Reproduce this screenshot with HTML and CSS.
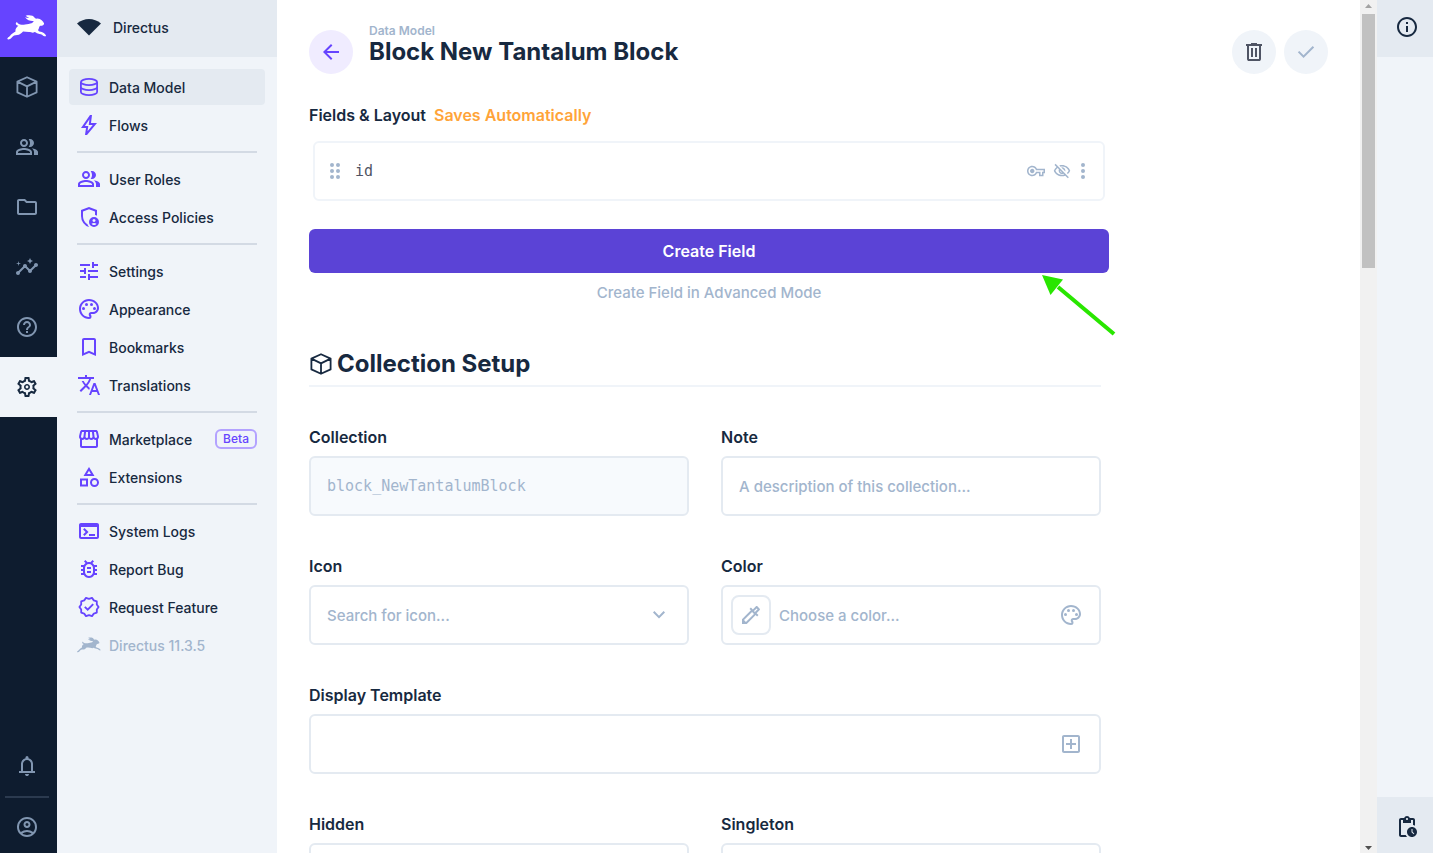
FILE: index.html
```html
<!DOCTYPE html>
<html lang="en">
<head>
<meta charset="utf-8">
<title>Block New Tantalum Block · Directus</title>
<link rel="stylesheet" href="styles.css">
</head>
<body>
<svg class="sprite" aria-hidden="true">
  <symbol id="rabbit" viewBox="0 0 120 76"><path d="M26 24C27 21 31 21 32 25C38 29 46 31 54 29C62 28 68 26 76 24C77 22 79 20 81 18C72 19 61 17 54 7C58 9 63 10 67 9C63 7 59 5 56 2C66 0 79 0 84 9C87 12 89 11 92 11C102 12 109 19 112 26C112 31 107 33 101 33C98 34 97 37 96 41C93 45 93 48 98 50C108 52 116 56 118 63C118 66 113 65 109 63C105 58 99 58 93 56C89 56 87 53 83 52C77 56 73 52 66 52C59 51 53 50 48 50C43 55 38 60 30 61C23 61 18 63 13 69C9 73 4 76 0 73C1 69 5 67 8 64C13 57 18 54 25 50C24 44 27 38 34 33C30 31 25 30 26 24Z"/></symbol>
  <symbol id="box" viewBox="0 0 24 24"><path fill="none" stroke="currentColor" stroke-width="1.8" stroke-linejoin="round" d="M12 2.2 21.6 6.6V17.4L12 21.8 2.4 17.4V6.6ZM2.4 6.6 12 11.4 21.6 6.6M12 11.4V21.8"/></symbol>
  <symbol id="people" viewBox="0 0 24 24"><path d="M16.67 13.13C18.04 14.06 19 15.32 19 17v3h4v-3c0-2.18-3.57-3.47-6.33-3.87zM15 12c2.21 0 4-1.79 4-4s-1.79-4-4-4c-.47 0-.91.1-1.33.24C14.5 5.27 15 6.58 15 8s-.5 2.73-1.33 3.76c.42.14.86.24 1.33.24zM9 12c2.21 0 4-1.79 4-4s-1.79-4-4-4-4 1.79-4 4 1.79 4 4 4zm0-6c1.1 0 2 .9 2 2s-.9 2-2 2-2-.9-2-2 .9-2 2-2zM9 13c-2.67 0-8 1.34-8 4v3h16v-3c0-2.66-5.33-4-8-4zm6 5H3v-.99C3.2 16.29 6.3 15 9 15s5.8 1.29 6 2v1z"/></symbol>
  <symbol id="folder" viewBox="0 0 24 24"><path d="M9.17 6l2 2H20v10H4V6h5.17M10 4H4c-1.1 0-1.99.9-1.99 2L2 18c0 1.1.9 2 2 2h16c1.1 0 2-.9 2-2V8c0-1.1-.9-2-2-2h-8l-2-2z"/></symbol>
  <symbol id="insights" viewBox="0 0 24 24"><path d="M21 8c-1.45 0-2.26 1.44-1.93 2.51l-3.55 3.56c-.3-.09-.74-.09-1.04 0l-2.55-2.55C12.27 10.45 11.46 9 10 9c-1.45 0-2.27 1.44-1.93 2.52l-4.56 4.55C2.44 15.74 1 16.55 1 18c0 1.1.9 2 2 2 1.45 0 2.26-1.44 1.93-2.51l4.55-4.56c.3.09.74.09 1.04 0l2.55 2.55C12.73 16.55 13.54 18 15 18c1.45 0 2.27-1.44 1.93-2.52l3.56-3.55C21.56 12.26 23 11.45 23 10c0-1.1-.9-2-2-2zM15 9l.94-2.07L18 6l-2.06-.93L15 3l-.92 2.07L12 6l2.08.93zM3.5 11L4 9l2-.5L4 8l-.5-2L3 8l-2 .5L3 9z"/></symbol>
  <symbol id="help" viewBox="0 0 24 24"><path d="M11 18h2v-2h-2v2zm1-16C6.48 2 2 6.48 2 12s4.48 10 10 10 10-4.48 10-10S17.52 2 12 2zm0 18c-4.41 0-8-3.59-8-8s3.59-8 8-8 8 3.59 8 8-3.59 8-8 8zm0-14c-2.21 0-4 1.79-4 4h2c0-1.1.9-2 2-2s2 .9 2 2c0 2-3 1.75-3 5h2c0-2.25 3-2.5 3-5 0-2.21-1.79-4-4-4z"/></symbol>
  <symbol id="gear" viewBox="0 0 24 24"><path d="M19.43 12.98c.04-.32.07-.64.07-.98 0-.34-.03-.66-.07-.98l2.11-1.65c.19-.15.24-.42.12-.64l-2-3.46c-.09-.16-.26-.25-.44-.25-.06 0-.12.01-.17.03l-2.49 1c-.52-.4-1.08-.73-1.69-.98l-.38-2.65C14.46 2.18 14.25 2 14 2h-4c-.25 0-.46.18-.49.42l-.38 2.65c-.61.25-1.17.59-1.69.98l-2.49-1c-.06-.02-.12-.03-.18-.03-.17 0-.34.09-.43.25l-2 3.46c-.13.22-.07.49.12.64l2.11 1.65c-.04.32-.07.65-.07.98 0 .33.03.66.07.98l-2.11 1.65c-.19.15-.24.42-.12.64l2 3.46c.09.16.26.25.44.25.06 0 .12-.01.17-.03l2.49-1c.52.4 1.08.73 1.69.98l.38 2.65c.03.24.24.42.49.42h4c.25 0 .46-.18.49-.42l.38-2.65c.61-.25 1.17-.59 1.69-.98l2.49 1c.06.02.12.03.18.03.17 0 .34-.09.43-.25l2-3.46c.12-.22.07-.49-.12-.64l-2.11-1.65zm-1.98-1.71c.04.31.05.52.05.73 0 .21-.02.43-.05.73l-.14 1.13.89.7 1.08.84-.7 1.21-1.27-.51-1.04-.42-.9.68c-.43.32-.84.56-1.25.73l-1.06.43-.16 1.13-.2 1.35h-1.4l-.19-1.35-.16-1.13-1.06-.43c-.43-.18-.83-.41-1.23-.71l-.91-.7-1.06.43-1.27.51-.7-1.21 1.08-.84.89-.7-.14-1.13c-.03-.31-.05-.54-.05-.74s.02-.43.05-.73l.14-1.13-.89-.7-1.08-.84.7-1.21 1.27.51 1.04.42.9-.68c.43-.32.84-.56 1.25-.73l1.06-.43.16-1.13.2-1.35h1.39l.19 1.35.16 1.13 1.06.43c.43.18.83.41 1.23.71l.91.7 1.06-.43 1.27-.51.7 1.21-1.07.85-.89.7.14 1.13zM12 9c-1.66 0-3 1.34-3 3s1.34 3 3 3 3-1.34 3-3-1.34-3-3-3zm0 4.4c-.77 0-1.4-.63-1.4-1.4s.63-1.4 1.4-1.4 1.4.63 1.4 1.4-.63 1.4-1.4 1.4z"/></symbol>
  <symbol id="bell" viewBox="0 0 24 24"><path d="M4 19v-2h2v-7q0-2.075 1.25-3.687T10.5 4.2v-.7q0-.625.438-1.062T12 2t1.063.438T13.5 3.5v.7q2 .5 3.25 2.113T18 10v7h2v2zM12 22q-.825 0-1.412-.587T10 20h4q0 .825-.587 1.413T12 22m-4-5h8v-7q0-1.65-1.175-2.825T12 6 9.175 7.175 8 10z"/></symbol>
  <symbol id="account" viewBox="0 0 24 24"><path d="M5.85 17.1q1.275-.975 2.85-1.537T12 15t3.3.563 2.85 1.537q.875-1.025 1.363-2.325T20 12q0-3.325-2.337-5.663T12 4 6.338 6.338 4 12q0 1.475.488 2.775T5.85 17.1M12 13q-1.475 0-2.488-1.012T8.5 9.5t1.013-2.488T12 6t2.488 1.013T15.5 9.5t-1.012 2.488T12 13m0 9q-2.075 0-3.9-.788t-3.175-2.137-2.137-3.175T2 12t.788-3.9 2.137-3.175T8.1 2.788 12 2t3.9.788 3.175 2.137T21.213 8.1 22 12t-.788 3.9-2.137 3.175-3.175 2.138T12 22m0-2q1.325 0 2.5-.387t2.15-1.113q-.975-.725-2.15-1.112T12 17t-2.5.388T7.35 18.5q.975.725 2.15 1.113T12 20m0-9q.65 0 1.075-.425T13.5 9.5t-.425-1.075T12 8t-1.075.425T10.5 9.5t.425 1.075T12 11"/></symbol>
  <symbol id="fan" viewBox="0 0 24 24"><path d="M0 7.5C7 1.5 17 1.5 24 7.5L12 19.5Z"/></symbol>
  <symbol id="database" viewBox="0 0 24 24"><path fill="none" stroke="currentColor" stroke-width="1.8" d="M12 3.9c4.5 0 8.1 1.4 8.1 3.1s-3.6 3.1-8.1 3.1S3.9 8.7 3.9 7 7.5 3.9 12 3.9ZM3.9 7v10c0 1.7 3.6 3.1 8.1 3.1s8.1-1.4 8.1-3.1V7M3.9 12c0 1.7 3.6 3.1 8.1 3.1s8.1-1.4 8.1-3.1"/></symbol>
  <symbol id="bolt" viewBox="0 0 24 24"><path d="m10.55 18.2 5.175-6.2h-4l.725-5.675L7.825 13H11.3zM8 22l1-7H4l9-13h2l-1 8h6L10 22z"/></symbol>
  <symbol id="shield" viewBox="0 0 24 24"><path d="M17 17q.625 0 1.063-.437T18.5 15.5t-.437-1.062T17 14t-1.062.438T15.5 15.5t.438 1.063T17 17m0 3q.775 0 1.425-.363t1.05-.962q-.55-.325-1.175-.5T17 18t-1.3.175-1.175.5q.4.6 1.05.963T17 20m-5 2q-3.475-.875-5.738-3.988T4 11.1V5l8-3 8 3v5.675q-.475-.2-.975-.363T18 10.076V6.4l-6-2.25L6 6.4v4.7q0 1.175.313 2.35t.875 2.238T8.55 17.65t1.775 1.425q.275.8.725 1.525t1.025 1.375q-.025 0-.037.013T12 22m5 0q-2.075 0-3.537-1.463T12 17t1.463-3.537T17 12t3.538 1.463T22 17t-1.463 3.538T17 22"/></symbol>
  <symbol id="tune" viewBox="0 0 24 24"><path d="M3 17v2h6v-2H3zM3 5v2h10V5H3zm10 16v-2h8v-2h-8v-2h-2v6h2zM7 9v2H3v2h4v2h2V9H7zm14 4v-2H11v2h10zm-6-4h2V7h4V5h-4V3h-2v6z"/></symbol>
  <symbol id="palette" viewBox="0 0 24 24"><path d="M12 22C6.49 22 2 17.51 2 12S6.49 2 12 2s10 4.04 10 9c0 3.31-2.69 6-6 6h-1.77c-.28 0-.5.22-.5.5 0 .12.05.23.13.33.41.47.64 1.06.64 1.67A2.5 2.5 0 0 1 12 22zm0-18c-4.41 0-8 3.59-8 8s3.59 8 8 8c.28 0 .5-.22.5-.5a.54.54 0 0 0-.14-.35c-.41-.46-.63-1.05-.63-1.65a2.5 2.5 0 0 1 2.5-2.5H16c2.21 0 4-1.79 4-4 0-3.86-3.59-7-8-7z"/><circle cx="6.5" cy="11.5" r="1.5"/><circle cx="9.5" cy="7.5" r="1.5"/><circle cx="14.5" cy="7.5" r="1.5"/><circle cx="17.5" cy="11.5" r="1.5"/></symbol>
  <symbol id="bookmark" viewBox="0 0 24 24"><path d="M17 3H7c-1.1 0-1.99.9-1.99 2L5 21l7-3 7 3V5c0-1.1-.9-2-2-2zm0 15l-5-2.18L7 18V5h10v13z"/></symbol>
  <symbol id="translate" viewBox="0 0 24 24"><path d="M12.87 15.07l-2.54-2.51.03-.03c1.74-1.94 2.98-4.17 3.71-6.53H17V4h-7V2H8v2H1v1.99h11.17C11.5 7.92 10.44 9.75 9 11.35 8.07 10.32 7.3 9.19 6.69 8h-2c.73 1.63 1.73 3.17 2.98 4.56l-5.09 5.02L4 19l5-5 3.11 3.11.76-2.04zM18.5 10h-2L12 22h2l1.12-3h4.75L21 22h2l-4.5-12zm-2.62 7l1.62-4.33L19.12 17h-3.24z"/></symbol>
  <symbol id="store" viewBox="0 0 24 24"><path d="M21.9 8.89l-1.05-4.37c-.22-.9-1-1.52-1.91-1.52H5.05c-.9 0-1.69.63-1.9 1.52L2.1 8.89c-.24 1.02-.02 2.06.62 2.88.08.11.19.19.28.29V19c0 1.1.9 2 2 2h14c1.1 0 2-.9 2-2v-6.94c.09-.09.2-.18.28-.28.64-.82.87-1.87.62-2.89zm-2.99-3.9l1.05 4.37c.1.42.01.84-.25 1.17-.14.18-.44.47-.94.47-.61 0-1.14-.49-1.21-1.14L16.98 5l1.93-.01zM13 5h1.96l.54 4.52c.05.39-.07.78-.33 1.07-.22.26-.54.41-.95.41-.67 0-1.22-.59-1.22-1.31V5zM8.49 9.52L9.04 5H11v4.69c0 .72-.55 1.31-1.29 1.31-.34 0-.65-.15-.89-.41a1.42 1.42 0 0 1-.33-1.07zm-4.45-.16L5.05 5h1.97l-.58 4.86c-.08.65-.6 1.14-1.21 1.14-.49 0-.8-.29-.93-.47a1.32 1.32 0 0 1-.26-1.17zM5 19v-6.03c.08.01.15.03.23.03.87 0 1.66-.36 2.24-.95.6.6 1.4.95 2.31.95.87 0 1.65-.36 2.23-.93.59.57 1.39.93 2.29.93.84 0 1.64-.35 2.24-.95.58.59 1.37.95 2.24.95.08 0 .15-.02.23-.03V19H5z"/></symbol>
  <symbol id="category" viewBox="0 0 24 24"><path d="M12 2l-5.5 9h11L12 2zm0 3.84L13.93 9h-3.87L12 5.84zM17.5 13c-2.49 0-4.5 2.01-4.5 4.5s2.01 4.5 4.5 4.5 4.5-2.01 4.5-4.5-2.01-4.5-4.5-4.5zm0 7a2.5 2.5 0 0 1 0-5 2.5 2.5 0 0 1 0 5zM3 21.5h8v-8H3v8zm2-6h4v4H5v-4z"/></symbol>
  <symbol id="terminal" viewBox="0 0 24 24"><path d="M20 4H4c-1.1 0-2 .9-2 2v12c0 1.1.9 2 2 2h16c1.1 0 2-.9 2-2V6c0-1.1-.9-2-2-2zm0 14H4V8h16v10zm-2-1h-6v-2h6v2zM7.5 17l-1.41-1.41L8.67 13l-2.59-2.59L7.5 9l4 4-4 4z"/></symbol>
  <symbol id="bug" viewBox="0 0 24 24"><path d="M20 8h-2.81c-.45-.78-1.07-1.45-1.82-1.96L17 4.41 15.59 3l-2.17 2.17C12.96 5.06 12.49 5 12 5s-.96.06-1.41.17L8.41 3 7 4.41l1.62 1.63C7.88 6.55 7.26 7.22 6.81 8H4v2h2.09c-.05.33-.09.66-.09 1v1H4v2h2v1c0 .34.04.67.09 1H4v2h2.81c1.04 1.79 2.97 3 5.19 3s4.15-1.21 5.19-3H20v-2h-2.09c.05-.33.09-.66.09-1v-1h2v-2h-2v-1c0-.34-.04-.67-.09-1H20V8zm-4 7c0 2.21-1.79 4-4 4s-4-1.79-4-4v-4c0-2.21 1.79-4 4-4s4 1.79 4 4v4zm-6-1h4v2h-4zm0-4h4v2h-4z" fill-rule="evenodd"/></symbol>
  <symbol id="badge" viewBox="0 0 24 24"><path fill="none" stroke="currentColor" stroke-width="1.8" stroke-linejoin="round" d="M21.6 12 19.8 14.5 19.8 17.6 16.8 18.6 15 21.1 12 20.2 9 21.1 7.2 18.6 4.2 17.6 4.2 14.5 2.4 12 4.2 9.5 4.2 6.4 7.2 5.4 9 2.9 12 3.8 15 2.9 16.8 5.4 19.8 6.4 19.8 9.5Z"/><path fill="none" stroke="currentColor" stroke-width="1.9" d="M7.8 11.9 10.7 14.7 16.2 9.2"/></symbol>
  <symbol id="back" viewBox="0 0 24 24"><path d="M20 11H7.83l5.59-5.59L12 4l-8 8 8 8 1.41-1.41L7.83 13H20v-2z"/></symbol>
  <symbol id="trash" viewBox="0 0 24 24"><path d="M7 21q-.825 0-1.412-.587T5 19V6H4V4h5V3h6v1h5v2h-1v13q0 .825-.587 1.413T17 21zM17 6H7v13h10zM9 17h2V8H9zm4 0h2V8h-2z"/></symbol>
  <symbol id="check" viewBox="0 0 24 24"><path d="m9.55 18-5.7-5.7 1.425-1.425L9.55 15.15l9.175-9.175L20.15 7.4z"/></symbol>
  <symbol id="info" viewBox="0 0 24 24"><path d="M11 7h2v2h-2zm0 4h2v6h-2zm1-9C6.48 2 2 6.48 2 12s4.48 10 10 10 10-4.48 10-10S17.52 2 12 2zm0 18c-4.41 0-8-3.59-8-8s3.59-8 8-8 8 3.59 8 8-3.59 8-8 8z"/></symbol>
  <symbol id="pending" viewBox="0 0 24 24"><path d="M17 12c-2.76 0-5 2.24-5 5s2.24 5 5 5 5-2.24 5-5-2.24-5-5-5zm1.65 7.35L16.5 17.2V14h1v2.79l1.85 1.85-.7.71zM18 3h-3.18C14.4 1.84 13.3 1 12 1s-2.4.84-2.82 2H6c-1.1 0-2 .9-2 2v15c0 1.1.9 2 2 2h6.11a6.743 6.743 0 0 1-1.42-2H6V5h2v3h8V5h2v5.08c.71.1 1.38.31 2 .6V5c0-1.1-.9-2-2-2zm-6 2c-.55 0-1-.45-1-1s.45-1 1-1 1 .45 1 1-.45 1-1 1z"/></symbol>
  <symbol id="key" viewBox="0 0 24 24"><path d="M22 19h-6v-4h-2.68c-1.14 2.42-3.6 4-6.32 4-3.86 0-7-3.14-7-7s3.14-7 7-7c2.72 0 5.17 1.58 6.32 4H24v6h-2v4zm-4-2h2v-4h2v-2H11.94l-.23-.67C11.01 8.34 9.11 7 7 7c-2.76 0-5 2.24-5 5s2.24 5 5 5c2.11 0 4.01-1.34 4.71-3.33l.23-.67H18v4zM7 15c-1.65 0-3-1.35-3-3s1.35-3 3-3 3 1.35 3 3-1.35 3-3 3z"/></symbol>
  <symbol id="hidden-eye" viewBox="0 0 24 24"><path d="M12 6c3.79 0 7.17 2.13 8.82 5.5-.59 1.22-1.42 2.27-2.41 3.12l1.41 1.41c1.39-1.23 2.49-2.77 3.18-4.53C21.27 7.11 17 4 12 4c-1.27 0-2.49.2-3.64.57l1.65 1.65C10.66 6.09 11.32 6 12 6zm-1.07 1.14L13 9.21c.57.25 1.03.71 1.28 1.28l2.07 2.07c.08-.34.14-.7.14-1.07C16.5 9.01 14.48 7 12 7c-.37 0-.72.05-1.07.14zM2.01 3.87l2.68 2.68A11.738 11.738 0 0 0 1 11.5C2.73 15.89 7 19 12 19c1.52 0 2.98-.29 4.32-.82l3.42 3.42 1.41-1.41L3.42 2.45 2.01 3.87zm7.5 7.5l2.61 2.61c-.04.01-.08.02-.12.02-1.38 0-2.5-1.12-2.5-2.5 0-.05.01-.08.01-.13zm-3.4-3.4l1.75 1.75a4.6 4.6 0 0 0-.36 1.78 4.507 4.507 0 0 0 6.27 4.15l.98.98c-.88.24-1.8.38-2.75.38-3.79 0-7.17-2.13-8.82-5.5.7-1.43 1.72-2.61 2.93-3.54z"/></symbol>
  <symbol id="more" viewBox="0 0 4 18"><circle cx="2" cy="3" r="2"/><circle cx="2" cy="9" r="2"/><circle cx="2" cy="15" r="2"/></symbol>
  <symbol id="drag" viewBox="0 0 24 24"><circle cx="9" cy="6" r="2"/><circle cx="15" cy="6" r="2"/><circle cx="9" cy="12" r="2"/><circle cx="15" cy="12" r="2"/><circle cx="9" cy="18" r="2"/><circle cx="15" cy="18" r="2"/></symbol>
  <symbol id="chevron" viewBox="0 0 24 24"><path d="M16.59 8.09L12 12.67 7.41 8.09 6 9.5l6 6 6-6z"/></symbol>
  <symbol id="dropper" viewBox="0 0 24 24"><path d="M17.66 5.41l.92.92-2.69 2.69-.92-.92 2.69-2.69M17.67 3c-.26 0-.51.1-.71.29l-3.12 3.12-1.93-1.91-1.41 1.41 1.42 1.42L3 16.25V21h4.75l8.92-8.92 1.42 1.42 1.41-1.41-1.92-1.92 3.12-3.12c.4-.4.4-1.03.01-1.42l-2.34-2.34c-.2-.19-.45-.29-.7-.29zM6.92 19L5 17.08l8.06-8.06 1.92 1.92L6.92 19z"/></symbol>
  <symbol id="add-box" viewBox="0 0 24 24"><path d="M19 3H5c-1.11 0-2 .9-2 2v14c0 1.1.89 2 2 2h14c1.1 0 2-.9 2-2V5c0-1.1-.9-2-2-2zm0 16H5V5h14v14zm-8-2h2v-4h4v-2h-4V7h-2v4H7v2h4z"/></symbol>
</svg>
<div class="app">
  <nav class="modules" aria-label="Modules">
    <a class="logo" href="#" aria-label="Directus"><svg class="logo-mark"><use href="#rabbit"/></svg></a>
    <a class="module" href="#" aria-label="Content"><svg class="icon"><use href="#box"/></svg></a>
    <a class="module" href="#" aria-label="Users"><svg class="icon"><use href="#people"/></svg></a>
    <a class="module" href="#" aria-label="Files"><svg class="icon"><use href="#folder"/></svg></a>
    <a class="module" href="#" aria-label="Insights"><svg class="icon"><use href="#insights"/></svg></a>
    <a class="module" href="#" aria-label="Help"><svg class="icon"><use href="#help"/></svg></a>
    <a class="module active" href="#" aria-label="Settings"><svg class="icon"><use href="#gear"/></svg></a>
    <div class="modules-end">
      <button class="module notifications" aria-label="Notifications"><svg class="icon"><use href="#bell"/></svg></button>
      <hr>
      <a class="module account" href="#" aria-label="Account"><svg class="icon"><use href="#account"/></svg></a>
    </div>
  </nav>
  <aside class="navigation">
    <header class="project"><svg class="icon"><use href="#fan"/></svg><span>Directus</span></header>
    <nav class="nav-list" aria-label="Settings">
      <a class="nav-item active" href="#"><svg class="icon"><use href="#database"/></svg><span class="nav-text">Data Model</span></a>
      <a class="nav-item" href="#"><svg class="icon"><use href="#bolt"/></svg><span class="nav-text">Flows</span></a>
      <hr>
      <a class="nav-item" href="#"><svg class="icon"><use href="#people"/></svg><span class="nav-text">User Roles</span></a>
      <a class="nav-item" href="#"><svg class="icon"><use href="#shield"/></svg><span class="nav-text">Access Policies</span></a>
      <hr>
      <a class="nav-item" href="#"><svg class="icon"><use href="#tune"/></svg><span class="nav-text">Settings</span></a>
      <a class="nav-item" href="#"><svg class="icon"><use href="#palette"/></svg><span class="nav-text">Appearance</span></a>
      <a class="nav-item" href="#"><svg class="icon"><use href="#bookmark"/></svg><span class="nav-text">Bookmarks</span></a>
      <a class="nav-item" href="#"><svg class="icon"><use href="#translate"/></svg><span class="nav-text">Translations</span></a>
      <hr>
      <a class="nav-item" href="#"><svg class="icon"><use href="#store"/></svg><span class="nav-text">Marketplace</span><span class="chip">Beta</span></a>
      <a class="nav-item" href="#"><svg class="icon"><use href="#category"/></svg><span class="nav-text">Extensions</span></a>
      <hr>
      <a class="nav-item" href="#"><svg class="icon"><use href="#terminal"/></svg><span class="nav-text">System Logs</span></a>
      <a class="nav-item" href="#"><svg class="icon"><use href="#bug"/></svg><span class="nav-text">Report Bug</span></a>
      <a class="nav-item" href="#"><svg class="icon"><use href="#badge"/></svg><span class="nav-text">Request Feature</span></a>
      <a class="nav-item version" href="#"><svg class="icon"><use href="#rabbit"/></svg><span class="nav-text">Directus 11.3.5</span></a>
    </nav>
  </aside>
  <main class="content">
    <header class="page-header">
      <button class="round back" aria-label="Back"><svg class="icon"><use href="#back"/></svg></button>
      <div class="titles"><a class="crumb" href="#">Data Model</a><h1>Block New Tantalum Block</h1></div>
      <button class="round" aria-label="Delete"><svg class="icon"><use href="#trash"/></svg></button>
      <button class="round save" aria-label="Save" disabled><svg class="icon"><use href="#check"/></svg></button>
    </header>
    <section class="fields">
      <h2 class="label">Fields &amp; Layout <span class="notice">Saves Automatically</span></h2>
      <div class="field-row">
        <svg class="icon"><use href="#drag"/></svg>
        <span class="field-name">id</span>
        <svg class="icon-small"><use href="#key"/></svg>
        <svg class="icon-small"><use href="#hidden-eye"/></svg>
        <button class="more" aria-label="Field options"><svg class="more-icon"><use href="#more"/></svg></button>
      </div>
      <div class="create">
        <button class="create-field">Create Field</button>
        <svg class="pointer" viewBox="0 0 76 64"><path d="M17 13 73 60" stroke="currentColor" stroke-width="4"/><path d="M1 1 22 5.5 9.500 21Z"/></svg>
      </div>
      <button class="advanced">Create Field in Advanced Mode</button>
    </section>
    <form class="form">
      <h2 class="section-title"><svg class="icon"><use href="#box"/></svg>Collection Setup</h2>
      <div class="field">
        <label class="label" for="collection">Collection</label>
        <div class="control disabled"><input class="mono" id="collection" value="block_NewTantalumBlock" disabled></div>
      </div>
      <div class="field">
        <label class="label" for="note">Note</label>
        <div class="control"><input id="note" placeholder="A description of this collection..."></div>
      </div>
      <div class="field">
        <label class="label" for="icon">Icon</label>
        <div class="control"><input id="icon" placeholder="Search for icon..."><svg class="icon"><use href="#chevron"/></svg></div>
      </div>
      <div class="field">
        <label class="label" for="color">Color</label>
        <div class="control color"><button type="button" class="swatch" aria-label="Pick a color"><svg class="icon"><use href="#dropper"/></svg></button><input id="color" placeholder="Choose a color..."><svg class="icon"><use href="#palette"/></svg></div>
      </div>
      <div class="field full">
        <label class="label" for="template">Display Template</label>
        <div class="control"><input id="template"><svg class="icon"><use href="#add-box"/></svg></div>
      </div>
      <div class="field">
        <label class="label" for="hidden">Hidden</label>
        <div class="control"><input id="hidden" type="checkbox"></div>
      </div>
      <div class="field">
        <label class="label" for="singleton">Singleton</label>
        <div class="control"><input id="singleton" type="checkbox"></div>
      </div>
    </form>
  </main>
  <div class="scrollbar" aria-hidden="true">
    <svg class="scroll-arrow dim" viewBox="0 0 17 14"><path d="M5 8 8.5 4 12 8Z"/></svg>
    <div class="thumb"></div>
    <svg class="scroll-arrow" viewBox="0 0 17 14"><path d="M5 7 8.5 11 12 7Z"/></svg>
  </div>
  <aside class="sidebar">
    <button class="side-button info" aria-label="Information"><svg class="icon"><use href="#info"/></svg></button>
    <button class="side-button activity" aria-label="Activity log"><svg class="icon"><use href="#pending"/></svg></button>
  </aside>
</div>
</body>
</html>
```

FILE: styles.css
```css
:root {
  --purple: #6644ff;
  --ink: #172940;
  --muted: #a2b5cd;
  --subtle: #f0f4f9;
  --line: #e4eaf1;
}
* { box-sizing: border-box; }
body {
  margin: 0;
  color: var(--ink);
  background: #fff;
  font: 500 15px/24px Inter, "Liberation Sans", sans-serif;
}
a { color: inherit; text-decoration: none; }
button { padding: 0; border: 0; background: none; color: inherit; font: inherit; cursor: pointer; }
h1, h2 { margin: 0; }
svg { display: block; flex: none; fill: currentColor; }
.sprite { position: absolute; width: 0; height: 0; }
.icon { width: 24px; height: 24px; }
.icon-small { width: 18px; height: 18px; }
.app { display: flex; height: 100vh; overflow: hidden; }

.modules { display: flex; flex-direction: column; flex: none; width: 57px; background: #0e1c2f; color: #8196b1; }
.logo { display: flex; align-items: center; height: 57px; padding: 0 7px 3px; background: var(--purple); color: #fff; }
.logo-mark { width: 40px; height: 25px; }
.module { display: flex; align-items: center; justify-content: center; width: 100%; height: 60px; padding-right: 3px; }
.module.active { background: var(--subtle); color: var(--ink); }
.modules-end { margin-top: auto; }
.modules-end hr { height: 2px; margin: 0 8px 0 5px; border: 0; background: #2b3a4f; }
.module.account { height: 55px; padding-top: 3px; }

.navigation { flex: none; width: 220px; background: var(--subtle); font-size: 14px; }
.project { display: flex; align-items: center; gap: 12px; height: 57px; padding: 0 20px 2px; background: var(--line); }
.nav-list { display: flex; flex-direction: column; gap: 2px; padding: 12px; }
.nav-item { display: flex; align-items: center; gap: 8px; height: 36px; padding: 0 8px; border-radius: 4px; }
.nav-item .icon { color: var(--purple); }
.nav-text { padding-top: 2px; }
.nav-item.active { background: var(--line); }
.nav-item.version, .nav-item.version .icon { color: var(--muted); }
.nav-list hr { width: auto; height: 2px; margin: 6px 8px; border: 0; background: #d3dae4; }
.chip { margin-left: auto; padding: 0 6px; border: 2px solid #b3a2ff; border-radius: 6px; color: var(--purple); font-size: 12px; line-height: 16px; }

.content { flex: 1; min-width: 0; padding: 24px 32px; overflow: hidden; }
.page-header { display: flex; align-items: flex-end; gap: 8px; margin-bottom: 28px; }
.titles { flex: 1; padding: 0 0 8px 8px; }
.crumb { display: block; color: var(--muted); font-size: 12px; font-weight: 600; line-height: 14px; }
h1, .section-title { font-size: 24px; font-weight: 700; line-height: 28px; }
.round { display: flex; align-items: center; justify-content: center; width: 44px; height: 44px; border-radius: 50%; background: var(--subtle); color: #4f5464; }
.round.back { background: #f0ecff; color: var(--purple); }
.round.save { color: var(--muted); }
.label { display: block; font-size: 16px; font-weight: 600; line-height: 26px; }
.notice { margin-left: 4px; color: #ffa439; }

.fields { display: flex; flex-direction: column; max-width: 800px; }
.field-row { display: flex; align-items: center; gap: 8px; height: 60px; margin: 13px 4px 28px; padding: 0 16px 0 8px; border: 2px solid var(--subtle); border-radius: 6px; color: var(--muted); }
.field-name { flex: 1; color: #4f5464; }
.field-name, .mono { font-family: "DejaVu Sans Mono", monospace; font-weight: 400; }
.more-icon { width: 8px; height: 18px; }
.create { position: relative; }
.create-field { display: block; width: 100%; height: 44px; border-radius: 6px; background: #5b43d6; color: #fff; font-size: 16px; font-weight: 600; }
.pointer { position: absolute; top: 45px; right: -8px; width: 76px; height: 64px; color: #29e600; }
.advanced { align-self: center; margin-top: 8px; color: var(--muted); }

.form { display: grid; grid-template-columns: 1fr 1fr; gap: 36px 32px; max-width: 792px; margin-top: 42px; }
.section-title { display: flex; align-items: center; gap: 4px; grid-column: 1 / -1; padding: 3px 0 7px; border-bottom: 2px solid var(--subtle); }
.full { grid-column: 1 / -1; }
.field .label { line-height: 28px; }
.control { display: flex; align-items: center; height: 60px; margin-top: 5px; padding: 0 16px; border: 2px solid var(--line); border-radius: 6px; color: var(--muted); }
.control.disabled { background: #f7fafd; }
.control input { flex: 1; min-width: 0; padding: 0; border: 0; outline: 0; background: none; color: var(--muted); font-size: 15px; font-weight: 500; font-family: inherit; }
.control input.mono { font-family: "DejaVu Sans Mono", monospace; font-weight: 400; }
.control input[type="checkbox"] { flex: none; width: 18px; height: 18px; }
.control input::placeholder { color: var(--muted); opacity: 1; }
.control.color { gap: 8px; padding-left: 8px; }
.swatch { display: flex; align-items: center; justify-content: center; width: 40px; height: 40px; border: 2px solid var(--line); border-radius: 8px; }

.scrollbar { display: flex; flex-direction: column; flex: none; width: 17px; background: #f1f1f1; color: #505050; }
.scroll-arrow { width: 17px; height: 14px; }
.scroll-arrow.dim { color: #a3a3a3; }
.thumb { width: 13px; height: 254px; margin: 0 auto auto 2px; background: #c1c1c1; }
.sidebar { display: flex; flex-direction: column; justify-content: space-between; flex: none; width: 56px; background: var(--subtle); }
.side-button { display: flex; align-items: center; justify-content: center; padding-left: 4px; background: var(--line); }
.side-button.info { height: 57px; padding-bottom: 3px; }
.side-button.activity { height: 56px; padding-top: 4px; }
```
